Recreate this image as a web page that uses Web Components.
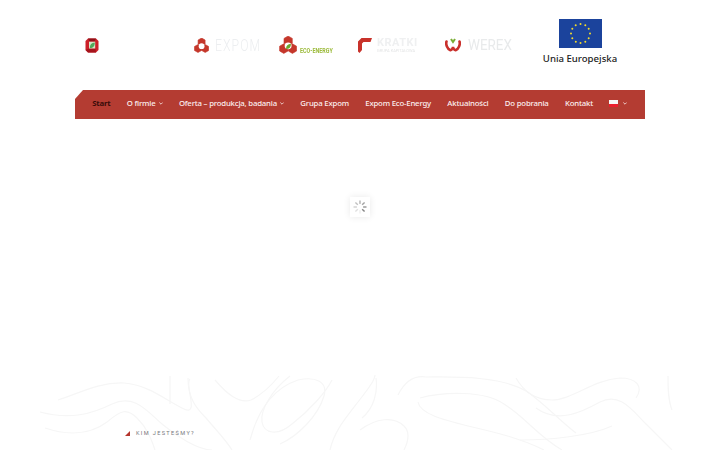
<!DOCTYPE html>
<html lang="pl">
<head>
<meta charset="utf-8">
<title>Expom</title>
<style>
  html, body { margin: 0; height: 450px; overflow: hidden; background: #fff; }
  body { font-family: "Noto Sans", sans-serif; display: flex; flex-direction: column; }
</style>
</head>
<body>
<site-header>
  <site-logo style="margin-left:10px" icon="cube"></site-logo>
  <site-logo style="margin-left:95px" icon="trefoil"></site-logo>
  <site-logo style="margin-left:19px" icon="eco"></site-logo>
  <site-logo style="margin-left:25px" icon="kratki"></site-logo>
  <site-logo style="margin-left:26px" icon="werex"></site-logo>
  <eu-badge style="margin-left:28px"></eu-badge>
</site-header>
<site-nav>
  <nav-item active>Start</nav-item>
  <nav-item caret>O firmie</nav-item>
  <nav-item caret>Oferta – produkcja, badania</nav-item>
  <nav-item>Grupa Expom</nav-item>
  <nav-item>Expom Eco-Energy</nav-item>
  <nav-item>Aktualności</nav-item>
  <nav-item>Do pobrania</nav-item>
  <nav-item>Kontakt</nav-item>
  <nav-item caret flag></nav-item>
</site-nav>
<page-loader></page-loader>
<about-band>KIM JESTEŚMY?</about-band>

<script>
// three hexagon lobes round a white hole, shared by the Expom and Eco-Energy marks
function lobes(r) {
  const hex = (cx, cy) => {
    let pts = [];
    for (let i = 0; i < 6; i++) {
      const a = Math.PI / 6 + i * Math.PI / 3;
      pts.push((cx + r * Math.cos(a)).toFixed(1) + "," + (cy + r * Math.sin(a)).toFixed(1));
    }
    return `<polygon points="${pts.join(" ")}"/>`;
  };
  const c = r * 1.9;
  return `<g fill="#c5372b" stroke="#c5372b" stroke-width=".6" stroke-linejoin="round">${hex(c, r)}${hex(r, r * 2.62)}${hex(c * 2 - r, r * 2.62)}</g>
    <circle cx="${c}" cy="${r * 2.05}" r="${r * .72}" fill="#fff"/>`;
}

const ICONS = {
  cube: `<svg width="14" height="15" viewBox="0 0 14 15"><path d="M3 .5h8l2.500 2.500v9L11 14.500H3L.5 12V3z" fill="#cc2029"/><path d="M3 .5h8l-1.500 3h-5z" fill="#8e1118"/><path d="M.5 12L4 10.500h6.500L11 14.500H3z" fill="#a5141c"/><rect x="4" y="3.700" width="6.200" height="6.800" fill="#d8e6c8"/><path d="M4.800 10c0-3.500 1.700-5.300 5-5.500 0 3.500-1.400 5.500-5 5.500z" fill="#4fa95a"/></svg>`,
  trefoil: `<svg width="16" height="15" viewBox="0 0 16 15">${lobes(4)}</svg>`,
  eco: `<svg width="19" height="18" viewBox="0 0 19 18">${lobes(4.800)}<path d="M7 13c0-3.500 1.800-5 5-5.300 0 3.500-1.600 5.300-5 5.300z" fill="#6aa82e"/></svg>`,
  kratki: `<svg width="14" height="15" viewBox="0 0 14 15"><path d="M3.500 0H14l-1.500 4H5.500L4 5.500V12l-2.500 3L0 13.500V3.500z" fill="#c8322a"/></svg>`,
  werex: `<svg width="16" height="14" viewBox="0 0 16 14"><path d="M6 1l2 3 2-3" fill="none" stroke="#79ad35" stroke-width="2"/><path d="M1.500 3.500c-1 3 1 7.500 3.500 8.500 1.500.5 2.500-1 3-3 .5 2 1.500 3.500 3 3 2.500-1 4.500-5.500 3.500-8.500" fill="none" stroke="#c9302c" stroke-width="2.600" stroke-linecap="round"/></svg>`
};

class SiteHeader extends HTMLElement {
  connectedCallback() {
    this.attachShadow({ mode: "open" }).innerHTML = `
      <style>
        :host { display: flex; align-items: center; box-sizing: border-box; height: 90px; padding: 0 75px; flex: none; }
      </style>
      <slot></slot>`;
  }
}

class SiteLogo extends HTMLElement {
  connectedCallback() {
    const icon = this.getAttribute("icon");
    const words = {
      trefoil: `<b class="wm">EXPOM</b>`,
      eco: `<b class="eco">ECO-ENERGY</b>`,
      kratki: `<span class="stack"><b class="kr">KRATKI</b><i>GRUPA KAPITAŁOWA</i></span>`,
      werex: `<b class="wx">WEREX</b>`
    }[icon] || "";
    this.attachShadow({ mode: "open" }).innerHTML = `
      <style>
        :host { display: flex; align-items: center; gap: 5px; flex: none; height: 20px; position: relative; }
        :host([icon="eco"]) { width: 54px; }
        svg { flex: none; display: block; filter: blur(.25px); }
        b, i { display: block; font-family: "Roboto", sans-serif; white-space: nowrap; transform-origin: left center; filter: blur(.3px); }
        .wm { font-weight: 300; font-size: 17px; color: #eceef0; width: 45px; transform: scaleX(.72); letter-spacing: 1.500px; }
        .eco { position: absolute; left: 21px; top: 11px; font-size: 7.500px; font-weight: 700; color: #9dbb3d; transform: scaleX(.72); }
        .stack { display: flex; flex-direction: column; width: 42px; }
        .kr { font-size: 11px; font-weight: 700; color: #eff0f1; letter-spacing: .5px; line-height: 10px; }
        i { font-style: normal; font-size: 4px; line-height: 5px; color: #e4e5e6; }
        .wx { font-weight: 400; font-size: 14px; color: #e8eaeb; width: 46px; margin-left: 2px; transform: scaleX(.96); }
      </style>
      ${ICONS[icon]}${words}`;
  }
}

class EuBadge extends HTMLElement {
  connectedCallback() {
    let stars = "";
    for (let i = 0; i < 12; i++) {
      const a = i * Math.PI / 6;
      const x = 21.5 + 9.5 * Math.cos(a), y = 14.5 + 9.5 * Math.sin(a);
      stars += `<circle cx="${x.toFixed(1)}" cy="${y.toFixed(1)}" r="1" fill="#f3dc2c"/>`;
    }
    this.attachShadow({ mode: "open" }).innerHTML = `
      <style>
        :host { display: flex; flex-direction: column; align-items: center; gap: 4px; flex: none; width: 76px; margin-bottom: 5px; }
        svg { display: block; }
        span { font-family: "Noto Sans", sans-serif; font-size: 9.600px; font-weight: 500; line-height: 14px; color: #222; white-space: nowrap; }
      </style>
      <svg width="43" height="29" viewBox="0 0 43 29"><rect width="43" height="29" fill="#1b439c"/>${stars}</svg>
      <span>Unia Europejska</span>`;
  }
}

class SiteNav extends HTMLElement {
  connectedCallback() {
    this.attachShadow({ mode: "open" }).innerHTML = `
      <style>
        :host { display: flex; align-items: center; box-sizing: border-box; flex: none; height: 29px;
          margin: 0 75px; padding-left: 9px; background: #b43c32;
          clip-path: polygon(8px 0, 100% 0, 100% 100%, 0 100%, 0 9px); }
      </style>
      <slot></slot>`;
  }
}

class NavItem extends HTMLElement {
  connectedCallback() {
    const caret = this.hasAttribute("caret") ? `<svg class="caret" width="4" height="3" viewBox="0 0 4 3"><path d="M.3.500L2 2.200 3.700.500" fill="none" stroke="currentColor" stroke-width=".8"/></svg>` : "";
    const flag = this.hasAttribute("flag") ? `<span class="flag"></span>` : "";
    this.attachShadow({ mode: "open" }).innerHTML = `
      <style>
        :host { display: flex; align-items: center; gap: 3px; box-sizing: border-box; padding: 0 8.200px 3px; flex: none; height: 100%;
          font-family: "Noto Sans", sans-serif; font-size: 7.800px; letter-spacing: -.2px; font-weight: 500; color: #fbeeee; white-space: nowrap; }
        :host([active]) { color: #3a0c0a; font-weight: 700; }
        .flag { flex: none; display: block; width: 9px; height: 7px; margin-right: 2px; background: linear-gradient(#f6f6f6 50%, #ea1f2d 50%); }
        .caret { flex: none; margin-top: 1px; }
      </style>
      ${flag}<slot></slot>${caret}`;
  }
}

class PageLoader extends HTMLElement {
  connectedCallback() {
    let ticks = "";
    for (let i = 0; i < 8; i++) {
      const shade = 238 - i * 15;
      ticks += `<rect x="9.300" y="3.500" width="1.400" height="3.400" fill="rgb(${shade},${shade},${shade})" transform="rotate(${i * 45 + 180} 10 10)"/>`;
    }
    this.attachShadow({ mode: "open" }).innerHTML = `
      <style>
        :host { display: flex; justify-content: center; align-items: flex-start; box-sizing: border-box; flex: 1; padding-top: 78px; }
        div { width: 20px; height: 20px; background: #fff; box-shadow: 0 0 7px rgba(0,0,0,.09); }
        svg { display: block; filter: blur(.3px); }
      </style>
      <div><svg width="20" height="20" viewBox="0 0 20 20">${ticks}</svg></div>`;
  }
}

class AboutBand extends HTMLElement {
  connectedCallback() {
    this.attachShadow({ mode: "open" }).innerHTML = `
      <style>
        :host { display: flex; align-items: flex-start; gap: 6px; box-sizing: border-box; flex: none; height: 75px;
          position: relative; padding: 55px 0 0 125px;
          font-family: "Roboto", sans-serif; font-size: 5.600px; line-height: 7px; letter-spacing: 1.350px; color: #77777c; }
        .bg { position: absolute; left: 0; top: 0; filter: blur(.4px); }
        .tri, span { position: relative; }
        .tri { display: block; margin-top: 1px; }
      </style>
      <svg class="bg" width="720" height="75" viewBox="0 375 720 75" fill="none" stroke="#f6f6f6" stroke-width="1.200">
        <path d="M58 400c20-6 40-18 66-17 24 2 40 16 60 26 16 8 0-26 6-30"/>
        <path d="M40 412c30 8 52 2 72-8 22-10 34 6 50 20 14 12 36 26 50 26"/>
        <path d="M45 428c24 8 46 6 62-6 14-12 20-14 30-4 10 10 14 20 18 32"/>
        <path d="M170 376v28M188 378c0 20 8 30 18 40 10 12 20 22 26 32"/>
        <path d="M215 380c12 14 24 24 36 20 12-6 20-14 28-24"/>
        <path d="M250 440c8-30 24-52 48-60 18-4 30 2 26 16-6 20-26 40-44 48"/>
        <path d="M290 376c-18 14-30 34-28 46 2 12 16 14 30 2 18-14 34-32 40-44"/>
        <path d="M330 450c4-18 14-30 28-48 14-18 20-26 16-32"/>
        <path d="M398 395c6-12 14-20 28-18 24 0 72-2 100 14 18 12 34 30 50 42"/>
        <path d="M420 398c22-6 64-8 84 6 22 14 34 32 58 46"/>
        <path d="M418 402c2 12 26 18 50 24 26 6 52 12 76 24"/>
        <path d="M516 378c8 14 20 22 36 22 20 0 40-20 68-22 16 0 24 8 16 20"/>
        <path d="M536 408c22 16 46 4 64-6 20-10 32 8 46 22 10 10 18 18 26 26"/>
        <path d="M520 440c30 0 70-4 92-14M360 430c16-12 34-14 44-4 6 6 4 16 0 24"/>
        <path d="M668 376c0 12 0 24 4 34M376 378c2 14-2 30-14 40"/>
      </svg>
      <svg class="tri" width="5" height="5" viewBox="0 0 5 5"><path d="M5 0v5H0z" fill="#b5352d"/></svg>
      <span><slot></slot></span>`;
  }
}

customElements.define("site-header", SiteHeader);
customElements.define("site-logo", SiteLogo);
customElements.define("eu-badge", EuBadge);
customElements.define("site-nav", SiteNav);
customElements.define("nav-item", NavItem);
customElements.define("page-loader", PageLoader);
customElements.define("about-band", AboutBand);
</script>
</body>
</html>
